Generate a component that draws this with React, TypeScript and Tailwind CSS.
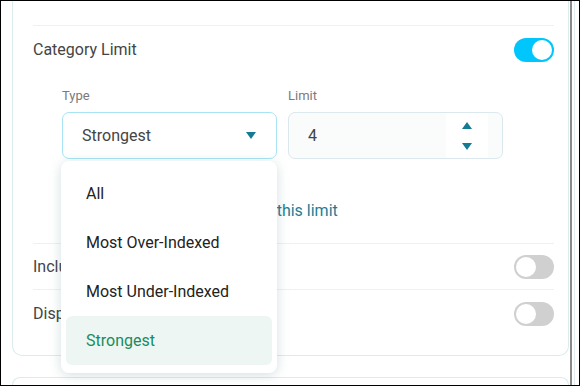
import { Fragment } from "react";

function Toggle({ on }: { on?: boolean }) {
  return (
    <div
      className={
        on
          ? "relative h-[24px] w-[40px] rounded-full bg-[#00c6fb]"
          : "relative h-[24px] w-[40px] rounded-full bg-[#d0d0d0]"
      }>
      <div
        className={
          on
            ? "absolute right-[2px] top-[2px] h-[20px] w-[20px] rounded-full bg-white"
            : "absolute left-[2px] top-[2px] h-[20px] w-[20px] rounded-full bg-white"
        }
      />
    </div>
  );
}

function Caret({ up }: { up?: boolean }) {
  return (
    <svg width="10" height="7" viewBox="0 0 10 7" className="block">
      {up ? <path d="M5 0 L10 7 L0 7 Z" fill="#157b93" /> : <path d="M0 0 L10 0 L5 7 Z" fill="#157b93" />}
    </svg>
  );
}

const options = ["All", "Most Over-Indexed", "Most Under-Indexed", "Strongest"];

export default function App() {
  return (
    <div
      className="flex h-[386px] w-[580px] overflow-hidden border border-black bg-white text-[#444]"
      style={{ fontFamily: "Roboto, 'Noto Sans', sans-serif" }}>
      <div className="flex w-[568px] shrink-0 flex-col pl-[11px]">
        {/* settings card (top cut off) */}
        <div className="relative rounded-b-[10px] border-x border-b border-[#dcebee] pb-[18px] pl-[20px] pr-[14px]">
          <div className="h-[24px]" />

          <div className="border-t border-[#eef1f1] pt-[11px]">
            <div className="flex h-[25px] items-center justify-between">
              <span className="text-[16px]">Category Limit</span>
              <Toggle on />
            </div>

            <div className="pl-[29px] pr-[51px]">
              <div className="mt-[26px] flex gap-[11px]">
                <div className="relative w-[215px]">
                  <div className="h-[16px] text-[13px] leading-[16px] text-[#7a7a7a]">Type</div>
                  <div className="mt-[8px] flex h-[47px] items-center justify-between rounded-[7px] border border-[#a9e4f4] pl-[19px] pr-[20px]">
                    <span className="text-[16px]">Strongest</span>
                    <Caret />
                  </div>

                  {/* open menu */}
                  <div className="absolute left-[-1px] top-[73px] z-10 w-[216px] rounded-[8px] bg-white py-[8px] shadow-[0_2px_12px_rgba(60,110,120,0.22)]">
                    {options.map((o) => (
                      <Fragment key={o}>
                        <div
                          className={
                            o === "Strongest"
                              ? "mx-[5px] flex h-[49px] items-center rounded-[6px] bg-[#eef6f3] pl-[20px] text-[16px] text-[#1b8b5c]"
                              : "mx-[5px] flex h-[49px] items-center pl-[20px] text-[16px] text-[#222]"
                          }>
                          {o}
                        </div>
                      </Fragment>
                    ))}
                  </div>
                </div>

                <div className="w-[215px]">
                  <div className="h-[16px] text-[13px] leading-[16px] text-[#7a7a7a]">Limit</div>
                  <div className="mt-[8px] flex h-[47px] items-center justify-between rounded-[7px] border border-[#dbe9ee] bg-[#fafbfb] pl-[19px] pr-[14px]">
                    <span className="text-[16px]">4</span>
                    <div className="flex h-[45px] w-[42px] flex-col items-center justify-center gap-[14px] bg-white">
                      <Caret up />
                      <Caret />
                    </div>
                  </div>
                </div>
              </div>

              <div className="mt-[42px] pb-[22px] pl-[17px] text-[16px] leading-[20px] text-[#1c7d96]">
                See categories excluded by this limit
              </div>
            </div>
          </div>

          <div className="flex h-[46px] items-center justify-between border-t border-[#eef1f1]">
            <span className="text-[16px]">Include other categories</span>
            <Toggle />
          </div>
          <div className="flex h-[48px] items-center justify-between border-t border-[#eef1f1]">
            <span className="text-[16px]">Display percentages</span>
            <Toggle />
          </div>
        </div>

        {/* next card */}
        <div className="mt-[21px] h-[40px] rounded-t-[10px] border-x border-t border-[#dcebee]" />
      </div>

      <div className="ml-[1px] w-[2px] shrink-0 bg-[#8a8a8a]" />
      <div className="ml-[2px] w-[1px] shrink-0 bg-[#e2eef0]" />
    </div>
  );
}
